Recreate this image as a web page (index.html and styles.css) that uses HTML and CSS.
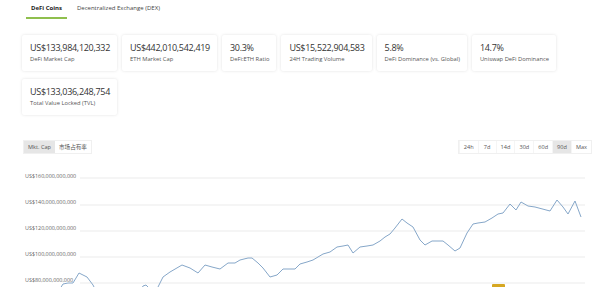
FILE: index.html
```html
<!DOCTYPE html>
<html lang="en">
<head>
  <meta charset="UTF-8">
  <title>DeFi Coins</title>
  <link rel="stylesheet" href="styles.css">
</head>
<body>
  <div class="tabs">
    <div class="tab active">DeFi Coins</div>
    <div class="tab">Decentralized Exchange (DEX)</div>
  </div>

  <div class="stats">
    <div class="stat-card">
      <div class="stat-value">US$133,984,120,332</div>
      <div class="stat-label">DeFi Market Cap</div>
    </div>
    <div class="stat-card">
      <div class="stat-value">US$442,010,542,419</div>
      <div class="stat-label">ETH Market Cap</div>
    </div>
    <div class="stat-card">
      <div class="stat-value">30.3%</div>
      <div class="stat-label">DeFi:ETH Ratio</div>
    </div>
    <div class="stat-card">
      <div class="stat-value">US$15,522,904,583</div>
      <div class="stat-label">24H Trading Volume</div>
    </div>
    <div class="stat-card">
      <div class="stat-value">5.8%</div>
      <div class="stat-label">DeFi Dominance (vs. Global)</div>
    </div>
    <div class="stat-card">
      <div class="stat-value">14.7%</div>
      <div class="stat-label">Uniswap DeFi Dominance</div>
    </div>
    <div class="stat-card">
      <div class="stat-value">US$133,036,248,754</div>
      <div class="stat-label">Total Value Locked (TVL)</div>
    </div>
  </div>

  <div class="chart-toolbar">
    <div class="btn-group">
      <button class="btn selected">Mkt. Cap</button>
      <button class="btn">市场占有率</button>
    </div>
    <div class="btn-group range">
      <button class="btn">24h</button>
      <button class="btn">7d</button>
      <button class="btn">14d</button>
      <button class="btn">30d</button>
      <button class="btn">60d</button>
      <button class="btn selected">90d</button>
      <button class="btn">Max</button>
    </div>
  </div>

  <svg class="chart" width="600" height="122" viewBox="0 165 600 122">
    <g class="grid">
      <line x1="80" y1="178" x2="585" y2="178"/>
      <line x1="80" y1="205" x2="585" y2="205"/>
      <line x1="80" y1="231" x2="585" y2="231"/>
      <line x1="80" y1="257" x2="585" y2="257"/>
      <line x1="80" y1="283" x2="585" y2="283"/>
    </g>
    <g class="axis-labels">
      <text x="25" y="178">US$160,000,000,000</text>
      <text x="25" y="204">US$140,000,000,000</text>
      <text x="25" y="230">US$120,000,000,000</text>
      <text x="25" y="256">US$100,000,000,000</text>
      <text x="25" y="282">US$80,000,000,000</text>
    </g>
    <polyline class="series" points="58,292 63,284 68,283 73,283 79,273 87,277 93,285 98,295 138,295 143,286 146,285 148,287 152,293 156,293 158,287 163,277 170,272 182,265 190,268 198,273 205,265 212,267 220,269 228,263 235,263 240,260 248,258 252,258 258,263 263,268 270,277 277,275 283,269 290,269 295,269 300,264 307,262 313,260 323,254 330,252 337,247 343,246 348,245 353,253 360,247 367,246 373,245 380,241 385,237 390,234 395,228 402,219 407,223 413,227 420,240 425,245 432,241 443,241 448,245 455,251 460,248 467,233 473,224 478,223 485,222 492,218 498,214 503,213 510,204 516,210 521,202 528,206 535,207 550,211 557,200 563,207 568,214 575,201 581,217"/>
    <rect class="marker" x="492" y="284" width="13" height="6" rx="1"/>
  </svg>
</body>
</html>
```

FILE: styles.css
```css
body {
  margin: 0;
  font-family: "Open Sans", "Noto Sans CJK SC", sans-serif;
  color: #333;
  background: #fff;
}

.tabs {
  display: flex;
  gap: 6px;
  padding-left: 26px;
  height: 19px;
}

.tab {
  padding: 0 4px;
  height: 17px;
  line-height: 16px;
  font-size: 6px;
  color: #444;
  border-bottom: 2px solid transparent;
}

.tab.active {
  padding: 0 5px;
  font-weight: bold;
  color: #222;
  border-bottom-color: #8fbf4d;
}

.stats {
  display: flex;
  flex-wrap: wrap;
  gap: 8px 5px;
  margin-top: 16px;
  padding: 0 8px 0 22px;
}

.stat-card {
  background: #fff;
  box-shadow: 0 0 3px rgba(0, 0, 0, 0.12);
  border-radius: 2px;
  padding: 7px 7px 6px 8px;
  height: 23px;
}

.stat-value {
  font-size: 9px;
  letter-spacing: -0.3px;
  line-height: 12px;
  color: #333;
}

.stat-label {
  font-size: 5.8px;
  line-height: 11px;
  color: #555;
}

.chart-toolbar {
  display: flex;
  justify-content: space-between;
  margin-top: 25px;
  padding: 0 8px 0 23px;
}

.btn-group {
  display: flex;
  border: 1px solid #f0f0f0;
}

.btn {
  font-family: inherit;
  font-size: 5.6px;
  color: #555;
  background: #fff;
  border: none;
  padding: 0 4px;
  height: 12px;
  line-height: 12px;
}

.btn.selected {
  background: #e6e6e6;
}

.range .btn {
  min-width: 18px;
  border-left: 1px solid #f5f5f5;
}

.chart {
  display: block;
  margin-top: 11px;
}

.grid line {
  stroke: #e6e6e6;
  stroke-width: 0.8;
}

.axis-labels text {
  font-family: "Open Sans", sans-serif;
  font-size: 5.4px;
  fill: #666;
}

.series {
  fill: none;
  stroke: #86a7c9;
  stroke-width: 1;
  stroke-linejoin: round;
}

.marker {
  fill: #d6a722;
}
```
